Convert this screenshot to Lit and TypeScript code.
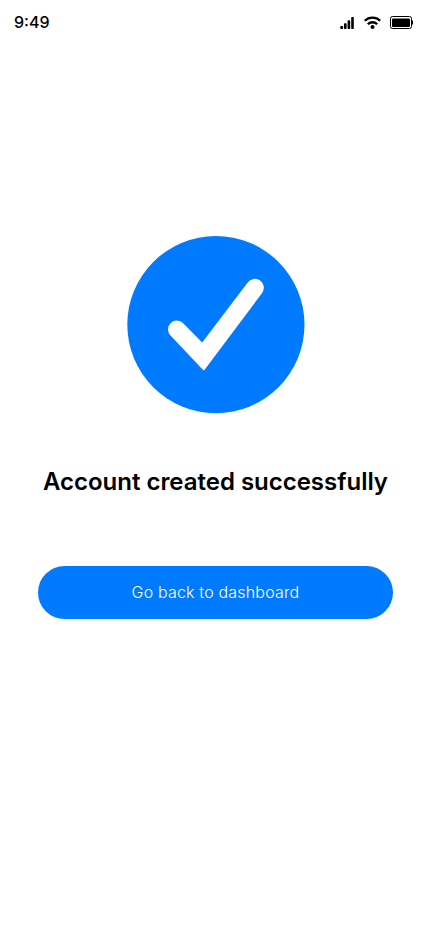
import { LitElement, html, css } from "lit";
import { customElement } from "lit/decorators.js";

@customElement("app-root")
class AppRoot extends LitElement {
  static styles = css`
    :host { display: flex; flex-direction: column; height: 932px; background: #fff; color: #000; font-family: Inter, sans-serif; overflow: hidden; }
    .status { height: 44px; box-sizing: border-box; padding: 0 17px 0 14px; display: flex; align-items: center; justify-content: space-between; }
    .time { font-size: 16px; font-weight: 500; line-height: 20px; }
    .icons { display: block; }
    .main { display: flex; flex-direction: column; align-items: center; padding: 192px 37px 0 38px; }
    .badge { display: block; }
    h1 { margin: 52px 0 0; font-size: 24px; font-weight: 600; line-height: 32px; letter-spacing: -.02px; white-space: nowrap; }
    button { margin-top: 68px; width: 100%; height: 53px; padding: 0 0 2px; border: 0; border-radius: 27px; background: #007bff; color: #fff; font: 300 16px Inter, sans-serif; letter-spacing: .18px; }
  `;
  render() {
    return html`
      <header class="status">
        <span class="time">9:49</span>
        <svg class="icons" width="73" height="16" viewBox="340 14 73 16">
          <g fill="#000"><rect x="340.300" y="26" width="2.800" height="3" rx=".8"/><rect x="344" y="23.200" width="2.600" height="5.800" rx=".8"/><rect x="347.600" y="20.200" width="2.600" height="8.800" rx=".8"/><rect x="351.200" y="17" width="2.600" height="12" rx=".8"/></g>
          <g fill="none" stroke="#000" stroke-width="2.300"><path d="M364.800 20.800a11 11 0 0 1 15.400 0M367.800 24.200a6.700 6.700 0 0 1 9.400 0"/></g><circle cx="372.500" cy="27" r="2"/>
          <rect x="390.500" y="16.500" width="21" height="12" rx="2" fill="none" stroke="#000"/><rect x="392" y="18.500" width="18" height="8.500" rx="1"/><path d="M412 20.500h1v4h-1z"/>
        </svg>
      </header>
      <main class="main">
        <svg class="badge" width="178" height="178" viewBox="127 236 178 178"><circle cx="215.900" cy="324.600" r="88.600" fill="#007bff"/><path d="M170.500 335.500a8.800 8.800 0 0 1 12.700-12.200l19 19.200 45.500-60a8.800 8.800 0 0 1 14.400 10.500l-57.500 76.700q-.8 1-1.700 0z" fill="#fff"/></svg>
        <h1>Account created successfully</h1>
        <button>Go back to dashboard</button>
      </main>`;
  }
}
